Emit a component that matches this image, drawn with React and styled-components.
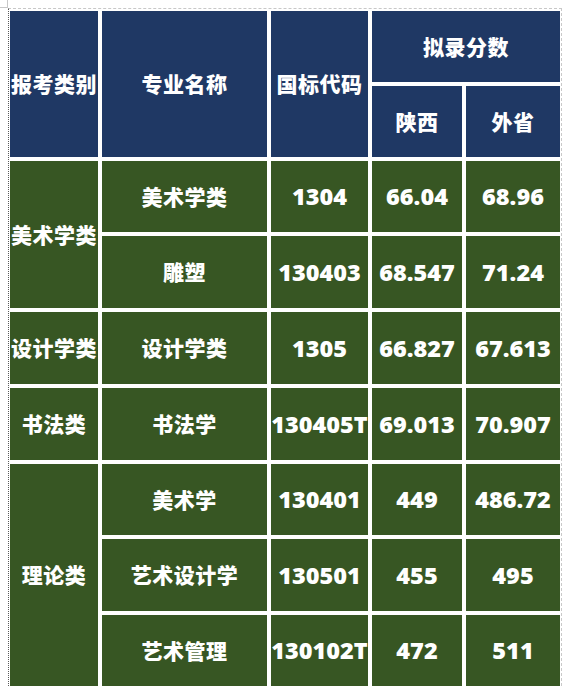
import React from 'react';
import styled, {createGlobalStyle} from "styled-components";

const GlobalStyle = createGlobalStyle`
  html, body {
    margin: 0;
    padding: 0;
    background: #ffffff;
  }
`;

const Page = styled.div`
  position: relative;
  padding: 8px 0 0 8px;
`;

const Corner = styled.div`
  position: absolute;
  left: 0;
  top: 0;
  width: 7px;
  height: 7px;
  border-right: 1px solid #c8c8c8;
  border-bottom: 1px solid #c8c8c8;
`;

const Handle = styled.div`
  position: absolute;
  left: 266px;
  top: 688px;
  width: 36px;
  height: 1px;
  background: #eeeeee;
  border-left: 1px solid #999;
  border-right: 1px solid #999;
`;

const Frame = styled.div`
  display: inline-block;
  border-top: 1px dashed #c8c8c8;
  border-right: 1px dashed #c8c8c8;
  border-left: 1px dotted #5a5a5a;
  padding: 2px 1px 0 1px;
`;

const Grid = styled.div`
  display: grid;
  grid-template-columns: 88px 165px 97px 90px 94px;
  grid-template-rows: 71px 71px 71px 72px 72px 72px 71px 72px 71px;
  gap: 4px;
`;

const Cell = styled.div`
  display: flex;
  align-items: center;
  justify-content: center;
  grid-row: span ${({$rows}) => $rows || 1};
  grid-column: span ${({$cols}) => $cols || 1};
  background-color: ${({$head}) => $head ? "#1f3864" : "#375623"};
  color: #ffffff;
  white-space: nowrap;
  overflow: hidden;
  ${({$num}) => $num
    ? `font-family: "Open Sans", "Noto Sans", sans-serif;
       font-weight: 800;
       font-size: 23.5px;
       padding-bottom: 1px;`
    : `font-family: "Noto Sans CJK SC", "Noto Sans", sans-serif;
       font-weight: 900;
       font-size: 21px;
       letter-spacing: 0.5px;
       padding-bottom: 2px;`}
`;

const body = [
  {group: "美术学类", span: 2, rows: [
    ["美术学类", "1304", "66.04", "68.96"],
    ["雕塑", "130403", "68.547", "71.24"],
  ]},
  {group: "设计学类", span: 1, rows: [
    ["设计学类", "1305", "66.827", "67.613"],
  ]},
  {group: "书法类", span: 1, rows: [
    ["书法学", "130405T", "69.013", "70.907"],
  ]},
  {group: "理论类", span: 3, rows: [
    ["美术学", "130401", "449", "486.72"],
    ["艺术设计学", "130501", "455", "495"],
    ["艺术管理", "130102T", "472", "511"],
  ]},
];

const App = () => {
  return (
    <Page>
      <GlobalStyle />
      <Corner />
      <Frame>
        <Grid>
          <Cell $head $rows={2}>报考类别</Cell>
          <Cell $head $rows={2}>专业名称</Cell>
          <Cell $head $rows={2}>国标代码</Cell>
          <Cell $head $cols={2}>拟录分数</Cell>
          <Cell $head>陕西</Cell>
          <Cell $head>外省</Cell>
          {body.map((g) => g.rows.map((r, i) => (
            <React.Fragment key={g.group + i}>
              {i === 0 && <Cell $rows={g.span}>{g.group}</Cell>}
              <Cell>{r[0]}</Cell>
              <Cell $num>{r[1]}</Cell>
              <Cell $num>{r[2]}</Cell>
              <Cell $num>{r[3]}</Cell>
            </React.Fragment>
          )))}
        </Grid>
      </Frame>
      <Handle />
    </Page>
  )
};

export default App;
